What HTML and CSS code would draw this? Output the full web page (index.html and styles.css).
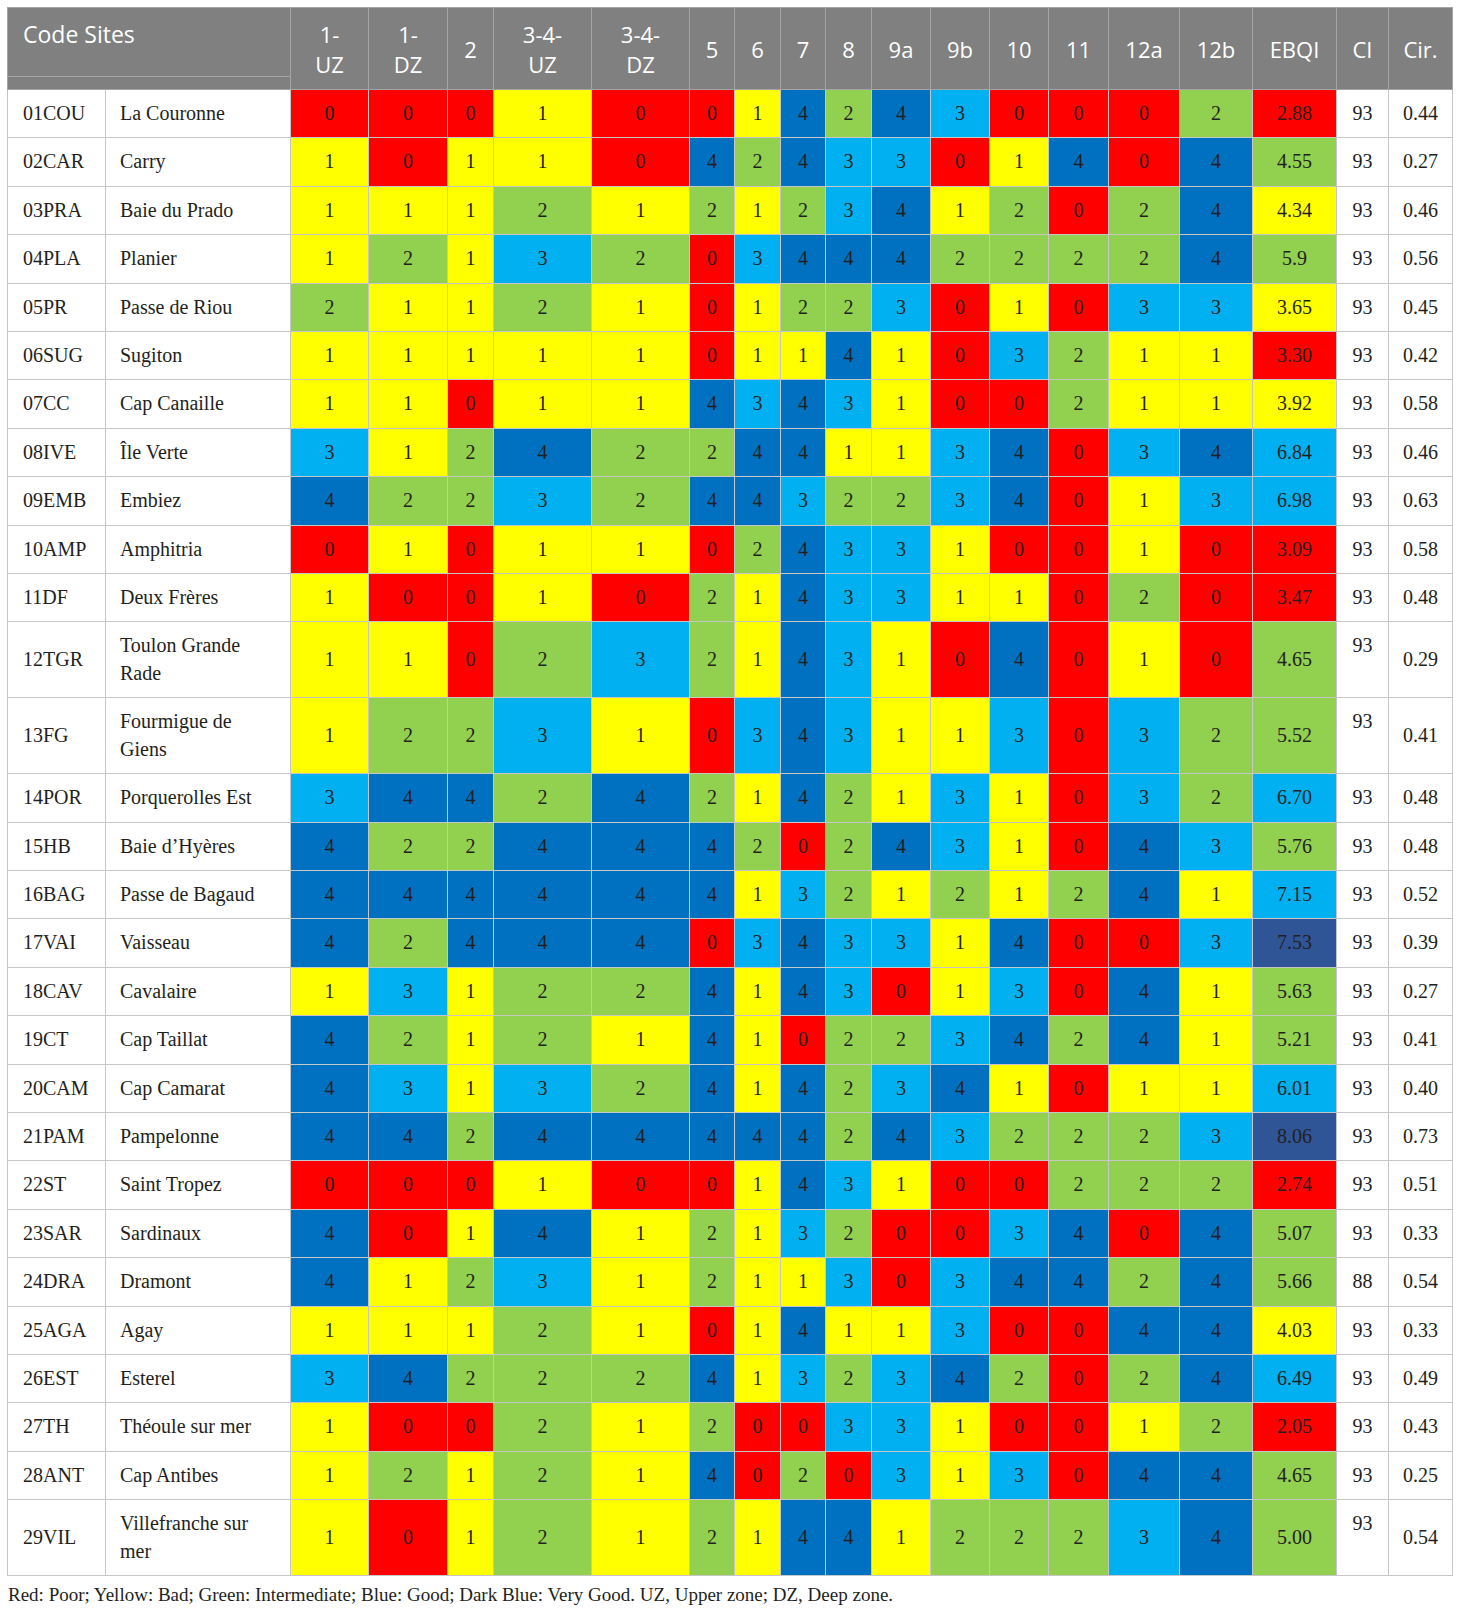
FILE: index.html
```html
<!DOCTYPE html>
<html lang="en">
<head>
  <meta charset="UTF-8" />
  <meta name="viewport" content="width=device-width, initial-scale=1.0" />
  <title>EBQI by site</title>
  <link rel="stylesheet" href="styles.css">
</head>
<body>
  <table class="ebqi">
    <colgroup>
      <col class="c-code"><col class="c-name">
      <col class="c-78"><col class="c-79"><col class="c-46">
      <col class="c-98"><col class="c-98">
      <col class="c-45"><col class="c-46"><col class="c-45"><col class="c-46">
      <col class="c-59"><col class="c-59"><col class="c-59"><col class="c-60">
      <col class="c-71"><col class="c-73">
      <col class="c-84"><col class="c-52"><col class="c-64">
    </colgroup>
    <thead>
      <tr class="head-top">
        <th colspan="2" class="code-head">Code Sites</th>
        <th rowspan="2">1-<br>UZ</th>
        <th rowspan="2">1-<br>DZ</th>
        <th rowspan="2">2</th>
        <th rowspan="2">3-4-<br>UZ</th>
        <th rowspan="2">3-4-<br>DZ</th>
        <th rowspan="2">5</th>
        <th rowspan="2">6</th>
        <th rowspan="2">7</th>
        <th rowspan="2">8</th>
        <th rowspan="2">9a</th>
        <th rowspan="2">9b</th>
        <th rowspan="2">10</th>
        <th rowspan="2">11</th>
        <th rowspan="2">12a</th>
        <th rowspan="2">12b</th>
        <th rowspan="2">EBQI</th>
        <th rowspan="2">CI</th>
        <th rowspan="2">Cir.</th>
      </tr>
      <tr class="head-sub">
        <th colspan="2"></th>
      </tr>
    </thead>
    <tbody id="rows"></tbody>
  </table>

  <p class="note">Red: Poor; Yellow: Bad; Green: Intermediate; Blue: Good; Dark Blue: Very Good. UZ, Upper zone; DZ, Deep zone.</p>

  <script>
    // code, site, 15 criteria scores (0-4), EBQI, EBQI class, CI, Cir.
    const sites = [
      ["01COU","La Couronne","000100142430002","2.88","r","93","0.44"],
      ["02CAR","Carry","101104243301404","4.55","g","93","0.27"],
      ["03PRA","Baie du Prado","111212123412024","4.34","y","93","0.46"],
      ["04PLA","Planier","121320344422224","5.9","g","93","0.56"],
      ["05PR","Passe de Riou","211210122301033","3.65","y","93","0.45"],
      ["06SUG","Sugiton","111110114103211","3.30","r","93","0.42"],
      ["07CC","Cap Canaille","110114343100211","3.92","y","93","0.58"],
      ["08IVE","Île Verte","312422441134034","6.84","b","93","0.46"],
      ["09EMB","Embiez","422324432234013","6.98","b","93","0.63"],
      ["10AMP","Amphitria","010110243310010","3.09","r","93","0.58"],
      ["11DF","Deux Frères","100102143311020","3.47","r","93","0.48"],
      ["12TGR","Toulon Grande Rade","110232143104010","4.65","g","93","0.29"],
      ["13FG","Fourmigue de Giens","122310343113032","5.52","g","93","0.41"],
      ["14POR","Porquerolles Est","344242142131032","6.70","b","93","0.48"],
      ["15HB","Baie d’Hyères","422444202431043","5.76","g","93","0.48"],
      ["16BAG","Passe de Bagaud","444444132121241","7.15","b","93","0.52"],
      ["17VAI","Vaisseau","424440343314003","7.53","n","93","0.39"],
      ["18CAV","Cavalaire","131224143013041","5.63","g","93","0.27"],
      ["19CT","Cap Taillat","421214102234241","5.21","g","93","0.41"],
      ["20CAM","Cap Camarat","431324142341011","6.01","b","93","0.40"],
      ["21PAM","Pampelonne","442444442432223","8.06","n","93","0.73"],
      ["22ST","Saint Tropez","000100143100222","2.74","r","93","0.51"],
      ["23SAR","Sardinaux","401412132003404","5.07","g","93","0.33"],
      ["24DRA","Dramont","412312113034424","5.66","g","88","0.54"],
      ["25AGA","Agay","111210141130044","4.03","y","93","0.33"],
      ["26EST","Esterel","342224132342024","6.49","b","93","0.49"],
      ["27TH","Théoule sur mer","100212003310012","2.05","r","93","0.43"],
      ["28ANT","Cap Antibes","121214020313044","4.65","g","93","0.25"],
      ["29VIL","Villefranche sur mer","101212144122234","5.00","g","93","0.54"]
    ];

    const tbody = document.getElementById("rows");
    sites.forEach(s => {
      const tr = document.createElement("tr");
      let html = `<td class="code">${s[0]}</td><td class="site">${s[1]}</td>`;
      s[2].split("").forEach(v => {
        html += `<td class="score s${v}">${v}</td>`;
      });
      html += `<td class="score e-${s[4]}">${s[3]}</td>`;
      html += `<td class="ci">${s[5]}</td><td class="cir">${s[6]}</td>`;
      tr.innerHTML = html;
      tbody.appendChild(tr);
    });
  </script>
</body>
</html>
```

FILE: styles.css
```css
:root {
  --red: #ff0000;
  --yellow: #ffff00;
  --green: #92d050;
  --blue: #00b0f0;
  --dark-blue: #0070c0;
  --navy: #2f5597;
  --head-bg: #808080;
  --line: #c6c6c6;
  --text: #231f20;
}

body {
  margin: 0;
  background: #fff;
  color: var(--text);
  font-family: "Liberation Serif", "Times New Roman", serif;
}

/* --- table --- */
.ebqi {
  margin: 7px 0 0 7px;
  width: 1446px;
  table-layout: fixed;
  border-collapse: collapse;
  font-size: 20px;
}

.c-code { width: 98px; }
.c-name { width: 185px; }
.c-78 { width: 78px; }
.c-79 { width: 79px; }
.c-46 { width: 46px; }
.c-98 { width: 98px; }
.c-45 { width: 45px; }
.c-59 { width: 59px; }
.c-60 { width: 60px; }
.c-71 { width: 71px; }
.c-73 { width: 73px; }
.c-84 { width: 84px; }
.c-52 { width: 52px; }
.c-64 { width: 64px; }

/* --- header --- */
.ebqi th {
  background: var(--head-bg);
  color: #fff;
  font-family: "Open Sans", "Liberation Sans", sans-serif;
  font-weight: normal;
  font-size: 22px;
  line-height: 30px;
  padding: 0 2px;
  border: 1px solid #a4a4a4;
  text-align: center;
  vertical-align: middle;
}
.head-top { height: 69px; }
.head-sub { height: 13px; }
.ebqi th.code-head {
  text-align: left;
  vertical-align: top;
  padding: 11px 15px 0;
  font-size: 23px;
}

/* --- body --- */
.ebqi td {
  border: 1px solid var(--line);
  padding: 10px 14px;
  line-height: 27.4px;
  vertical-align: middle;
  text-align: center;
}
.ebqi td.code,
.ebqi td.site {
  text-align: left;
}
.ebqi td.code { padding-left: 15px; }
.ebqi td.score { padding: 10px 2px; }
.ebqi td.ci {
  vertical-align: top;
  padding: 10px 2px 0;
}
.ebqi td.cir { padding: 10px 2px; }

.s0, .e-r { background: var(--red); }
.s1, .e-y { background: var(--yellow); }
.s2, .e-g { background: var(--green); }
.s3, .e-b { background: var(--blue); }
.s4 { background: var(--dark-blue); }
.e-n { background: var(--navy); }

.note {
  margin: 8px 0 0 8px;
  font-size: 19px;
}
```
